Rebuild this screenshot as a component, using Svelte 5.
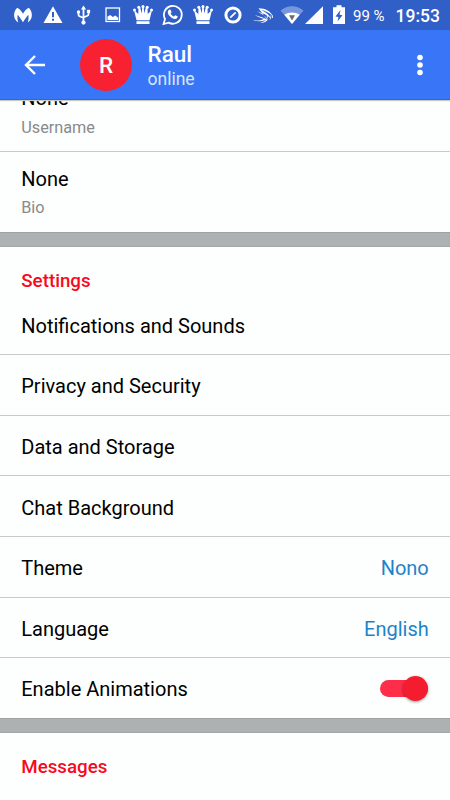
<script>
  const settings = [
    { label: 'Notifications and Sounds' },
    { label: 'Privacy and Security' },
    { label: 'Data and Storage' },
    { label: 'Chat Background' },
    { label: 'Theme', value: 'Nono' },
    { label: 'Language', value: 'English' },
    { label: 'Enable Animations', toggle: true }
  ];
  let animations = $state(true);
</script>

{#snippet crown()}
  <svg viewBox="0 0 30 30">
    <path d="M8.500 20.200 6 10l4.300 4 .2-7h1.500l1.800 6.500.5-7h1.400l.5 7L18 7h1.500l.2 7L24 10l-2.500 10.200z" />
    <rect x="8.500" y="21.200" width="13" height="2.800" />
    <circle cx="6.500" cy="10" r="1.500" />
    <circle cx="10.800" cy="7.300" r="1.500" />
    <circle cx="15" cy="6.500" r="1.500" />
    <circle cx="19.200" cy="7.300" r="1.500" />
    <circle cx="23.500" cy="10" r="1.500" />
  </svg>
{/snippet}

<div class="screen">
  <div class="status">
    <div class="notifications">
      <svg viewBox="0 0 30 30">
        <path d="M10.200 22.400C4.800 19.500 5 11.500 9.300 7.800c2 1 4.200 3.200 5.700 6 1.500-2.800 3.700-5 5.700-6 4.300 3.700 4.500 11.700-.900 14.600.800-2.300 1-5.100.500-7.600-1.600 1.800-3.300 4.500-5.300 7.400-2-2.900-3.700-5.600-5.300-7.400-.500 2.500-.300 5.300.5 7.600z" />
      </svg>
      <svg viewBox="0 0 30 30">
        <path fill-rule="evenodd" d="M15 6.300 24.500 23h-19zM14 12v5.300h2V12zm0 6.800v2h2v-2z" />
      </svg>
      <svg viewBox="0 0 30 30">
        <path class="line" d="M15.500 8.500V22M10.500 12.500v2.300q0 1.200 1.200 1.500l3.800 1.700M20.500 12v2.300q0 1.200-1.200 1.500l-3.800 1.700" />
        <path d="m15.500 5.600 2.600 4h-5.200z" />
        <circle cx="10.500" cy="12" r="1.700" />
        <rect x="18.900" y="9.800" width="3.200" height="3.200" />
        <circle cx="15.500" cy="22.600" r="2.100" />
      </svg>
      <svg viewBox="0 0 30 30">
        <rect class="line thin" x="8" y="8" width="13.500" height="13.500" />
        <path d="M9.500 20v-3.500l2.700-1.500 2.700 2 2.400-1.400 2.900 2.200V20z" />
      </svg>
      {@render crown()}
      <svg viewBox="0 0 30 30">
        <path class="line" d="m5.600 24 1.400-5A8.900 8.900 0 1 1 10.600 22.600z" />
        <path d="M11 9.800c.8-.6 1.500-.3 1.800.4l.7 1.700c.2.500-.7 1.200-.9 1.600.8 1.500 1.800 2.400 3.300 3 .5-.3 1-1.300 1.500-1.200l2 1c.5.300.1 1.500-.5 2-1.400 1.100-3.300.5-5-.4-1.700-1-3.100-2.600-3.800-4.200-.6-1.500-.3-3 .9-3.900z" />
      </svg>
      {@render crown()}
      <svg viewBox="0 0 30 30">
        <circle class="line thick" cx="15" cy="15" r="7.100" />
        <path class="line" d="m12.300 17.700 5.400-5.400" />
      </svg>
      <svg viewBox="0 0 30 30">
        <path d="M10.500 8.300c7 0 12.700 3.200 14.500 8.500-3.200-4-7.500-6-12.500-7 4.800 2 9 5 10.700 9.200-3.500-4-8.500-6-14.500-7.800 5.300 2.700 9.500 5 11 8.800-3.200-2.500-7.700-3.300-13-5 3 1.900 6 3.100 9.500 3.700-3 1.800-7 2-11 1.600 4 1.400 8.500 1.300 12.500-.3-1.500 1.500-3.500 2.300-5.700 2.700 3 .1 5.500-.5 7.500-2.500" />
        <path class="line hair" d="M22 19.500c.8-1.500 1-2.500.7-4M19 18.500c.5-1 .6-2 .3-3M24.500 18v-2.500" />
      </svg>
    </div>
    <svg class="wifi" viewBox="0 0 24 30">
      <path class="dim" d="M.500 10.500C7.500 4.800 16.500 4.800 23.500 10.500L12 24z" />
      <path d="M4.300 14.800C9 11.800 15 11.800 19.700 14.800L12 24z" />
      <path class="mark" d="M9 15.300h6L12 20.500z" />
    </svg>
    <svg class="signal" viewBox="0 0 20 30"><path d="M19 6.300V24H1z" /></svg>
    <svg class="battery" viewBox="0 0 14 30">
      <path fill-rule="evenodd" d="M4.500 5.300h5v2H13V24H1V7.300h3.500zM8.500 10 3.500 16.500l3 .5-1 4.500 5-6.300-3-.5z" />
    </svg>
    <span class="percent">99 %</span>
    <span class="clock">19:53</span>
  </div>

  <header>
    <svg class="back" viewBox="0 0 22 22"><path d="M21 11H2M11 2l-9 9 9 9" /></svg>
    <div class="avatar">R</div>
    <div class="person">
      <div class="name">Raul</div>
      <div class="state">online</div>
    </div>
    <svg class="more" viewBox="0 0 6 22">
      <circle cx="3" cy="3.500" r="2.800" />
      <circle cx="3" cy="11" r="2.800" />
      <circle cx="3" cy="18.500" r="2.800" />
    </svg>
  </header>

  <main>
    <div class="info username">
      <div class="text">None</div>
      <div class="hint">Username</div>
    </div>
    <div class="info bio">
      <div class="text">None</div>
      <div class="hint">Bio</div>
    </div>
    <div class="divider"></div>
    <h2>Settings</h2>
    {#each settings as row}
      <div class="row">
        <span>{row.label}</span>
        {#if row.value}
          <span class="value">{row.value}</span>
        {:else if row.toggle}
          <button class="switch" class:on={animations} aria-label={row.label} onclick={() => (animations = !animations)}>
            <span class="thumb"></span>
          </button>
        {/if}
      </div>
    {/each}
    <div class="divider"></div>
    <h2>Messages</h2>
  </main>
</div>

<style>
  :global(body) {
    background: #fcfffe;
  }
  .screen {
    display: flex;
    flex-direction: column;
    width: 450px;
    height: 800px;
    overflow: hidden;
    background: #fcfffe;
    color: #000;
    font-family: Roboto, sans-serif;
    font-size: 20px;
  }
  .status {
    display: flex;
    flex: none;
    align-items: center;
    height: 30px;
    padding-left: 7.5px;
    box-sizing: border-box;
    background: #305fc8;
    color: #fff;
    white-space: nowrap;
  }
  .status svg {
    display: block;
    flex: none;
    height: 30px;
    fill: #fff;
  }
  .notifications {
    display: flex;
  }
  .notifications svg {
    width: 30px;
  }
  .status .line {
    fill: none;
    stroke: #fff;
    stroke-width: 1.8;
  }
  .status .thin {
    stroke-width: 1.3;
  }
  .status .thick {
    stroke-width: 3;
  }
  .status .hair {
    stroke-width: 0.8;
  }
  .wifi {
    width: 24px;
    margin-left: 2px;
  }
  .wifi .dim {
    opacity: 0.35;
  }
  .wifi .mark {
    fill: #6b6b6b;
  }
  .signal {
    width: 20px;
    margin-left: 0.5px;
  }
  .battery {
    width: 14px;
    margin-left: 8px;
  }
  .percent {
    width: 42.5px;
    margin-left: 7px;
    padding-top: 1px;
    font-size: 15px;
    line-height: 18px;
  }
  .clock {
    padding-top: 1px;
    font-size: 17.5px;
    font-weight: 500;
  }
  header {
    display: flex;
    flex: none;
    align-items: center;
    height: 70px;
    box-sizing: border-box;
    padding: 0 27px 0 24px;
    border-bottom: 1px solid #2a68dc;
    background: #3976f7;
    color: #fff;
    box-shadow: 0 1px 1px #c9cbc3;
    z-index: 1;
  }
  .back {
    width: 22px;
    height: 22px;
    fill: none;
    stroke: #fff;
    stroke-width: 2.4;
  }
  .avatar {
    width: 52px;
    height: 52px;
    margin-left: 34px;
    border-radius: 50%;
    background: #f82131;
    font-size: 22.5px;
    font-weight: 500;
    line-height: 53px;
    text-align: center;
  }
  .person {
    flex: 1;
    margin-left: 15.5px;
    padding-top: 3px;
  }
  .name {
    font-size: 22.5px;
    font-weight: 500;
    line-height: 26px;
  }
  .state {
    font-size: 17.5px;
    line-height: 24px;
    color: #d9e5fd;
  }
  .more {
    width: 6px;
    height: 22px;
    fill: #fff;
  }
  .info {
    box-sizing: border-box;
    padding: 14px 21.25px 0;
    line-height: 26px;
  }
  .username {
    height: 81px;
    margin-top: -29px;
    border-bottom: 1px solid #c8cacb;
  }
  .username .hint {
    margin-top: 4px;
  }
  .bio {
    height: 80px;
  }
  .hint {
    margin-top: 3px;
    font-size: 16.25px;
    color: #8a8a8a;
  }
  .divider {
    height: 15px;
    box-sizing: border-box;
    border-top: 1px solid #9fa2a3;
    border-bottom: 1px solid #a5a8a9;
    background: #aeb1b2;
  }
  h2 {
    height: 47.4px;
    margin: 0;
    padding: 11px 21.25px 0;
    box-sizing: border-box;
    color: #f8091d;
    font-size: 18.75px;
    font-weight: 500;
    line-height: 46px;
  }
  .row {
    display: flex;
    justify-content: space-between;
    align-items: center;
    height: 60.65px;
    box-sizing: border-box;
    padding: 3px 21.25px 0;
    border-bottom: 1px solid #c8cacb;
  }
  .row:has(.switch) {
    height: 59.7px;
    padding: 1px 22.5px 0 21.25px;
    border-bottom: 0;
  }
  .value {
    color: #1e83c9;
  }
  .switch {
    display: flex;
    align-items: center;
    width: 48px;
    height: 17px;
    padding: 0;
    border: 0;
    border-radius: 9px;
    background: #bbb;
  }
  .switch.on {
    justify-content: flex-end;
    background: #ff2d49;
  }
  .thumb {
    width: 25px;
    height: 25px;
    flex: none;
    border-radius: 50%;
    background: #f41d2f;
    box-shadow: 0 1px 3px rgba(0, 0, 0, 0.4);
  }
</style>
